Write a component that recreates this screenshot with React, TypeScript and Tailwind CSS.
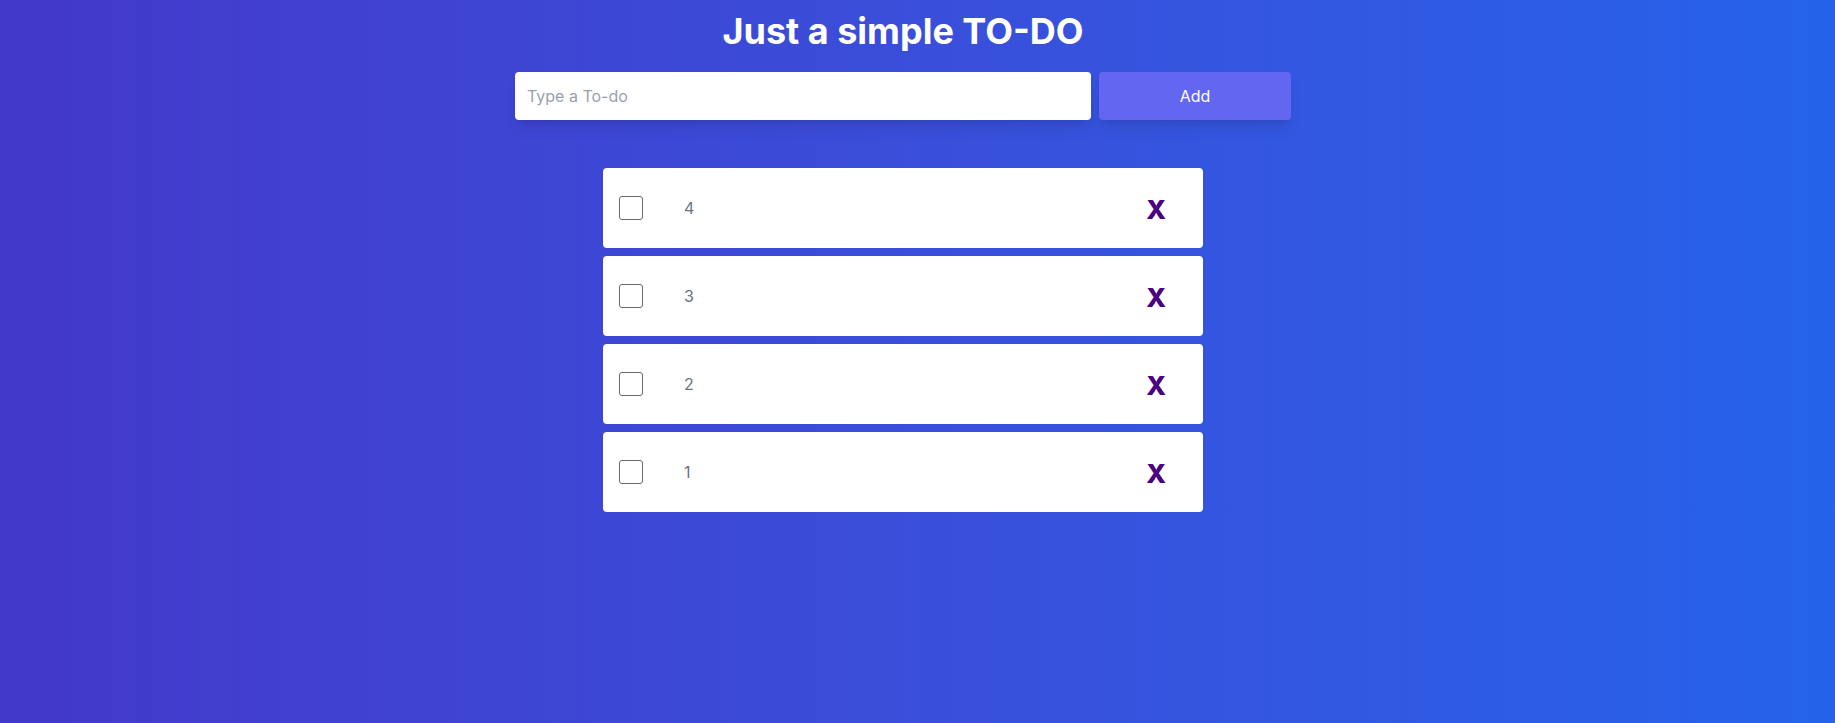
import { useState } from "react";

type Todo = { id: number; text: string; done: boolean };

export default function App() {
  const [todos, setTodos] = useState<Todo[]>([
    { id: 4, text: "4", done: false },
    { id: 3, text: "3", done: false },
    { id: 2, text: "2", done: false },
    { id: 1, text: "1", done: false },
  ]);
  const [value, setValue] = useState("");

  function addTodo() {
    if (!value.trim()) return;
    const id = Date.now();
    setTodos((t) => [{ id, text: value, done: false }, ...t]);
    setValue("");
  }

  function toggle(id: number) {
    setTodos((t) => t.map((x) => (x.id === id ? { ...x, done: !x.done } : x)));
  }

  function remove(id: number) {
    setTodos((t) => t.filter((x) => x.id !== id));
  }

  return (
    <div className="min-h-screen bg-linear-to-r from-[#4338ca] to-[#2563eb] font-['Inter',sans-serif]">
      <div className="flex flex-col items-center pr-[29px] pt-[11px]">
        <h1 className="text-[36px] leading-[40px] font-bold text-white">Just a simple TO-DO</h1>

        <div className="mt-[21px] flex gap-2">
          <input
            value={value}
            onChange={(e) => setValue(e.target.value)}
            placeholder="Type a To-do"
            className="h-12 w-[576px] rounded bg-white px-3 text-base text-gray-700 placeholder:text-gray-400 shadow-lg outline-none"
          />
          <button
            onClick={addTodo}
            className="h-12 w-[192px] rounded bg-[#6366f1] text-base text-white shadow-lg"
          >
            Add
          </button>
        </div>

        <ul className="mt-12 flex flex-col gap-2">
          {todos.map((t) => (
            <li key={t.id} className="flex h-20 w-[600px] items-center rounded bg-white pl-4 pr-[37px]">
              <input
                type="checkbox"
                checked={t.done}
                onChange={() => toggle(t.id)}
                className="h-6 w-6 appearance-none rounded-[3px] border border-[#6b6b6b] bg-white checked:bg-[#4b0082]"
              />
              <span className={`ml-[41px] flex-1 text-base text-gray-500 ${t.done ? "line-through" : ""}`}>{t.text}</span>
              <button onClick={() => remove(t.id)} className="pt-[3px] text-[26px] leading-none font-extrabold text-[#4b0082]">
                X
              </button>
            </li>
          ))}
        </ul>
      </div>
    </div>
  );
}
